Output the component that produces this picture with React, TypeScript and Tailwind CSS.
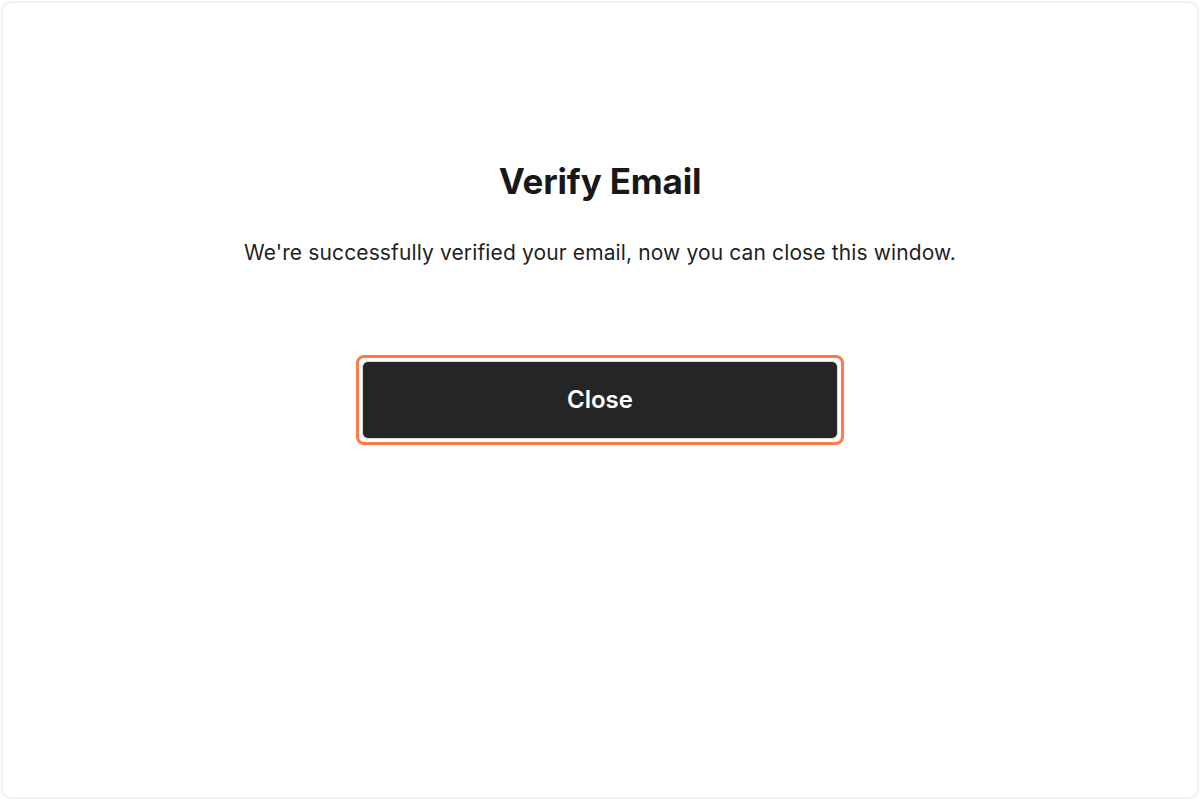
export default function App() {
  return (
    <div className="h-[800px] w-full bg-white p-[1px] font-['Inter','Noto_Sans',sans-serif]">
      <div className="flex h-full flex-col items-center rounded-[10px] border-2 border-[#f0f0f5] bg-white pt-[158px]">
        <h1 className="text-[35px] font-bold leading-[40px] tracking-[-0.005em] text-[#181818]">Verify Email</h1>
        <p className="mt-[38px] text-[21px] leading-[28px] tracking-[0.006em] text-[#1f1f1f]">
          We're successfully verified your email, now you can close this window.
        </p>
        <div className="mt-[88px] rounded-[8px] border-[3px] border-[#ff7a45] p-[4px]">
          <button className="flex h-[76px] w-[474px] items-center justify-center rounded-[5px] bg-[#252525] text-[24px] font-semibold text-white shadow-[0_0_0_1px_rgba(0,0,0,0.15)]">
            Close
          </button>
        </div>
      </div>
    </div>
  );
}
